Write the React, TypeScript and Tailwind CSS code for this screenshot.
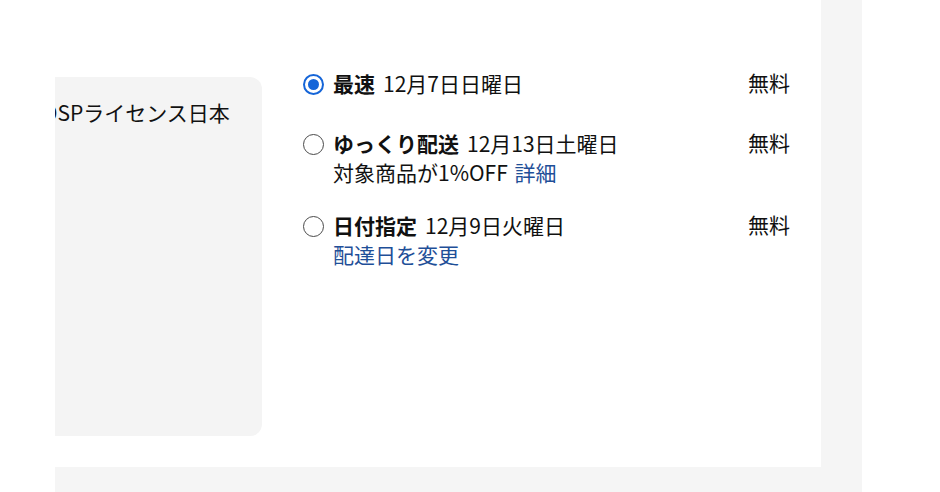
import React from "react";

const font = { fontFamily: '"Noto Sans CJK JP", "Noto Sans", sans-serif' };

function Radio({ checked }: { checked?: boolean }) {
  return checked ? (
    <div className="mt-[5px] w-[21px] h-[21px] shrink-0 rounded-full border-2 border-[#1565d8] flex items-center justify-center bg-white">
      <div className="w-[11px] h-[11px] rounded-full bg-[#1565d8]" />
    </div>
  ) : (
    <div className="mt-[5px] w-[21px] h-[21px] shrink-0 rounded-full border-[1.5px] border-[#4a4a4a] bg-white" />
  );
}

function Row({
  checked,
  title,
  date,
  sub,
  className,
}: {
  checked?: boolean;
  title: string;
  date: string;
  sub?: React.ReactNode;
  className?: string;
}) {
  return (
    <div className={"flex items-start " + (className ?? "")}>
      <Radio checked={checked} />
      <div className="ml-[9px] flex-1 leading-[29px]">
        <div className="whitespace-nowrap">
          <span className="font-bold">{title}</span>
          <span className="ml-[8px]">{date}</span>
        </div>
        {sub && <div className="whitespace-nowrap">{sub}</div>}
      </div>
      <div className="leading-[29px] -mt-[1px]">無料</div>
    </div>
  );
}

export default function App() {
  return (
    <div className="w-[940px] h-[492px] bg-white flex overflow-hidden text-[21px] text-[#111111]" style={font}>
      <div className="w-[55px] shrink-0" />
      <div className="w-[807px] shrink-0 h-[492px] bg-[#f5f5f5]">
        <div className="w-[766px] h-[467px] bg-white flex">
          <div className="w-[207px] shrink-0 mt-[77px] h-[359px] bg-[#f4f4f4] rounded-r-[12px] overflow-hidden">
            <div className="mt-[21px] -ml-[12px] whitespace-nowrap leading-[29px]">DSPライセンス日本</div>
          </div>
          <div className="ml-[41px] flex-1 pr-[31px] pt-[69px]">
            <Row checked title="最速" date="12月7日日曜日" />
            <Row
              className="mt-[31px]"
              title="ゆっくり配送"
              date="12月13日土曜日"
              sub={
                <>
                  対象商品が1%OFF <span className="ml-[2px] text-[#1f4f98]">詳細</span>
                </>
              }
            />
            <Row
              className="mt-[24px]"
              title="日付指定"
              date="12月9日火曜日"
              sub={<span className="text-[#1f4f98]">配達日を変更</span>}
            />
          </div>
        </div>
      </div>
    </div>
  );
}
